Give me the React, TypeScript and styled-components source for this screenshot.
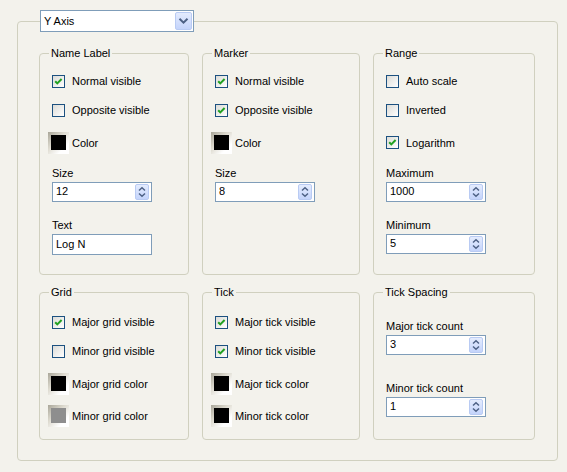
import React from "react";
import styled, { createGlobalStyle } from "styled-components";

const GlobalStyle = createGlobalStyle`
  html, body {
    margin: 0;
    padding: 0;
    background: #f3f2ec;
  }
  body {
    font-family: "Liberation Sans", Arial, sans-serif;
    font-size: 11px;
    color: #000;
  }
`;

const Page = styled.div`
  width: 567px;
  height: 472px;
  box-sizing: border-box;
  padding: 10px 0 0 17px;
  background: #f3f2ec;
`;

const Outer = styled.fieldset`
  width: 541px;
  box-sizing: border-box;
  margin: 0;
  padding: 14.5px 21px 20px;
  border: 1px solid #d0d0bf;
  border-radius: 4px;
`;

const OuterLegend = styled.legend`
  padding: 0;
  margin-left: 1px;
`;

const Combo = styled.div`
  width: 154px;
  height: 22px;
  box-sizing: border-box;
  border: 1px solid #7f9db9;
  background: #fff;
  display: flex;
  align-items: center;
`;

const ComboText = styled.span`
  flex: 1;
  padding-left: 3px;
  line-height: 13px;
`;

const XpButton = styled.span<{ $w: number; $h: number }>`
  width: ${p => p.$w}px;
  height: ${p => p.$h}px;
  box-sizing: border-box;
  margin-right: ${p => (p.$w > 15 ? 1 : 2)}px;
  border: 1px solid #b9cbf3;
  border-radius: 2px;
  background: linear-gradient(to bottom, #e4ecfe, #c4d4fb);
  display: flex;
  align-items: center;
  justify-content: center;
`;

const Groups = styled.div`
  display: grid;
  grid-template-columns: 150px 158px 162px;
  grid-template-rows: 228px 154px;
  column-gap: 13px;
  row-gap: 11px;
`;

const Group = styled.fieldset<{ $top: number }>`
  margin: 0;
  min-width: 0;
  padding: ${p => p.$top}px 12px 0;
  border: 1px solid #d0d0bf;
  border-radius: 4px;
`;

const Legend = styled.legend`
  padding: 0 2px;
  margin-left: -3px;
  line-height: 13px;
`;

const CheckRow = styled.label<{ $tall?: boolean }>`
  display: flex;
  align-items: center;
  gap: 7px;
  height: ${p => (p.$tall ? 32 : 29)}px;
  margin-top: ${p => (p.$tall ? 2 : 0)}px;
`;

const CheckBox = styled.span`
  width: 13px;
  height: 13px;
  box-sizing: border-box;
  border: 1px solid #1c5180;
  background: linear-gradient(135deg, #dcdcd7, #ffffff);
  display: flex;
`;

const ColorRow = styled.div<{ $first?: boolean }>`
  display: flex;
  align-items: center;
  gap: 3px;
  height: 32px;
  margin-top: ${p => (p.$first ? 2 : 0)}px;
  margin-left: -4px;
`;

const ColorButton = styled.span`
  width: 21px;
  height: 22px;
  box-sizing: border-box;
  padding: 3px 3px 4px 3px;
  background: linear-gradient(135deg, #a9a699 0%, #dedbd0 40%, #ffffff 75%);
`;

const Swatch = styled.span<{ $c: string }>`
  display: block;
  width: 15px;
  height: 15px;
  background: ${p => p.$c};
`;

const Field = styled.div<{ $gap: number }>`
  margin-top: ${p => p.$gap}px;
`;

const FieldLabel = styled.div`
  line-height: 13px;
`;

const InputBox = styled.div<{ $h?: number }>`
  margin-top: 2px;
  width: 100px;
  height: ${p => p.$h ?? 20}px;
  box-sizing: border-box;
  border: 1px solid #7f9db9;
  background: #fff;
  display: flex;
  align-items: center;
`;

const InputText = styled.span`
  flex: 1;
  padding-left: 3px;
  line-height: 13px;
`;

const Check = ({ on }: { on: boolean }) => (
  <CheckBox>
    {on && (
      <svg width="11" height="11" viewBox="0 0 11 11">
        <polyline points="2.2,5.2 4.3,7.4 8.6,3" fill="none" stroke="#21a121" strokeWidth="2" />
      </svg>
    )}
  </CheckBox>
);

const CheckItem = ({ label, on, tall }: { label: string; on: boolean; tall?: boolean }) => (
  <CheckRow $tall={tall}>
    <Check on={on} />
    <span>{label}</span>
  </CheckRow>
);

const ColorItem = ({ label, color, first }: { label: string; color: string; first?: boolean }) => (
  <ColorRow $first={first}>
    <ColorButton>
      <Swatch $c={color} />
    </ColorButton>
    <span>{label}</span>
  </ColorRow>
);

const Spinner = ({ label, value, gap }: { label: string; value: string; gap: number }) => (
  <Field $gap={gap}>
    <FieldLabel>{label}</FieldLabel>
    <InputBox>
      <InputText>{value}</InputText>
      <XpButton $w={14} $h={16}>
        <svg width="12" height="14" viewBox="0 0 12 14">
          <path d="M3 5.5 L6 2.8 L9 5.5" fill="none" stroke="#4d6185" strokeWidth="1.5" />
          <path d="M3 8.5 L6 11.2 L9 8.5" fill="none" stroke="#4d6185" strokeWidth="1.5" />
        </svg>
      </XpButton>
    </InputBox>
  </Field>
);

const TextField = ({ label, value, gap }: { label: string; value: string; gap: number }) => (
  <Field $gap={gap}>
    <FieldLabel>{label}</FieldLabel>
    <InputBox $h={21}>
      <InputText>{value}</InputText>
    </InputBox>
  </Field>
);

export default function App() {
  return (
    <Page>
      <GlobalStyle />
      <Outer>
        <OuterLegend>
          <Combo>
            <ComboText>Y Axis</ComboText>
            <XpButton $w={17} $h={18}>
              <svg width="11" height="8" viewBox="0 0 11 8">
                <path d="M1.5 1.8 L5.5 5.6 L9.5 1.8" fill="none" stroke="#4d6185" strokeWidth="2" />
              </svg>
            </XpButton>
          </Combo>
        </OuterLegend>
        <Groups>
          <Group $top={7}>
            <Legend>Name Label</Legend>
            <CheckItem label="Normal visible" on />
            <CheckItem label="Opposite visible" on={false} />
            <ColorItem label="Color" color="#000" first />
            <Spinner label="Size" value="12" gap={8} />
            <TextField label="Text" value="Log N" gap={17} />
          </Group>
          <Group $top={7}>
            <Legend>Marker</Legend>
            <CheckItem label="Normal visible" on />
            <CheckItem label="Opposite visible" on />
            <ColorItem label="Color" color="#000" first />
            <Spinner label="Size" value="8" gap={8} />
          </Group>
          <Group $top={7}>
            <Legend>Range</Legend>
            <CheckItem label="Auto scale" on={false} />
            <CheckItem label="Inverted" on={false} />
            <CheckItem label="Logarithm" on tall />
            <Spinner label="Maximum" value="1000" gap={8} />
            <Spinner label="Minimum" value="5" gap={17} />
          </Group>
          <Group $top={9}>
            <Legend>Grid</Legend>
            <CheckItem label="Major grid visible" on />
            <CheckItem label="Minor grid visible" on={false} />
            <ColorItem label="Major grid color" color="#000" first />
            <ColorItem label="Minor grid color" color="#8e8e8e" />
          </Group>
          <Group $top={9}>
            <Legend>Tick</Legend>
            <CheckItem label="Major tick visible" on />
            <CheckItem label="Minor tick visible" on />
            <ColorItem label="Major tick color" color="#000" first />
            <ColorItem label="Minor tick color" color="#000" />
          </Group>
          <Group $top={9}>
            <Legend>Tick Spacing</Legend>
            <Spinner label="Major tick count" value="3" gap={12} />
            <Spinner label="Minor tick count" value="1" gap={27} />
          </Group>
        </Groups>
      </Outer>
    </Page>
  );
}
